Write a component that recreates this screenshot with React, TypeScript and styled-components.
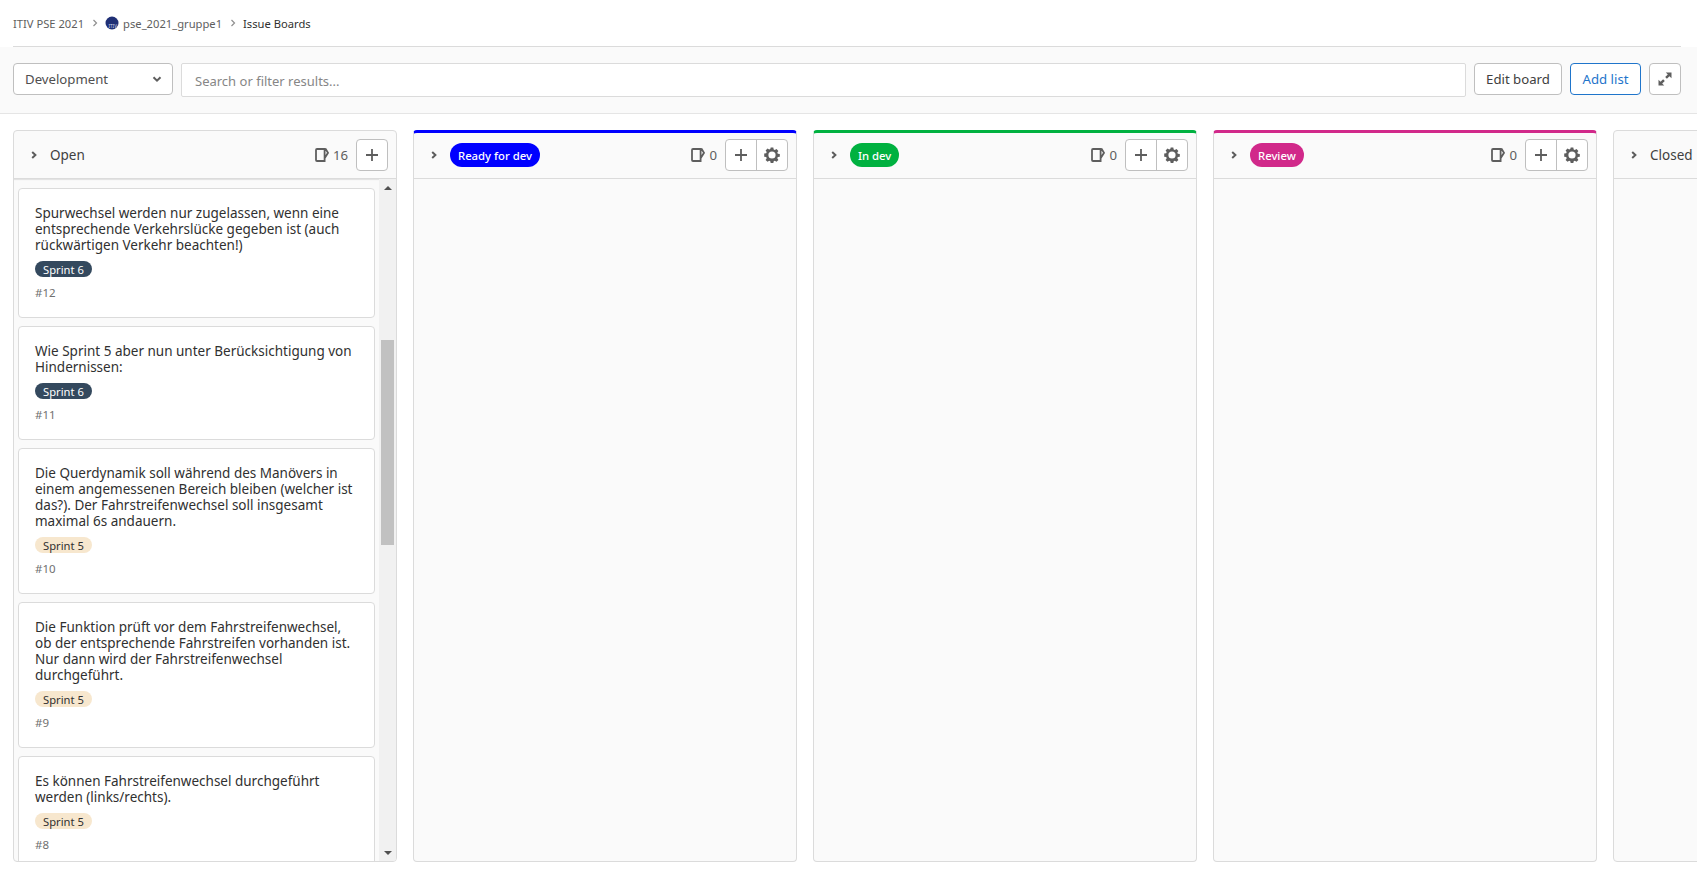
import React from 'react'
import styled, { createGlobalStyle } from 'styled-components'

const GlobalStyle = createGlobalStyle`
  html, body {
    margin: 0;
    padding: 0;
    height: 100%;
    overflow: hidden;
    background: #fff;
  }
  body {
    font-family: "Noto Sans", "Open Sans", sans-serif;
    font-size: 13.2px;
    color: #303030;
  }
`

const Page = styled.div`
  width: 1697px;
  height: 872px;
  overflow: hidden;
  display: flex;
  flex-direction: column;
`
const Breadcrumbs = styled.nav`
  height: 46px;
  margin: 0 16px 0 13px;
  border-bottom: 1px solid #dbdbdb;
  display: flex;
  align-items: center;
  flex-shrink: 0;
  font-size: 11.2px;
  color: #5e5e5e;
`
const Crumb = styled.span<{ current?: boolean }>`
  display: flex;
  align-items: center;
  gap: 4px;
  color: ${({ current }) => (current ? '#303030' : '#5e5e5e')};
`
const CrumbSep = styled.svg`
  width: 8px;
  height: 8px;
  margin: 0 6.5px;
  fill: none;
  stroke: #8f8f8f;
  stroke-width: 1.2;
`
const Avatar = styled.svg`
  width: 14px;
  height: 14px;
`
const FilterBar = styled.div`
  height: 67px;
  box-sizing: border-box;
  background: #fafafa;
  border-bottom: 1px solid #e5e5e5;
  padding: 16px 16px 0 13px;
  display: flex;
  align-items: flex-start;
  flex-shrink: 0;
`
const BoardSelect = styled.div`
  width: 160px;
  height: 32px;
  box-sizing: border-box;
  background: #fff;
  border: 1px solid #bfbfbf;
  border-radius: 4px;
  padding: 0 10px 0 11px;
  display: flex;
  align-items: center;
  justify-content: space-between;
  margin-right: 8px;
  color: #4f4f4f;
`
const SearchBox = styled.div`
  flex: 1;
  height: 34px;
  box-sizing: border-box;
  background: #fff;
  border: 1px solid #dbdbdb;
  border-radius: 2px;
  padding: 1px 13px 0;
  display: flex;
  align-items: center;
  font-size: 13px;
  color: #868686;
  margin-right: 8px;
`
const Button = styled.button<{ primary?: boolean; square?: boolean }>`
  height: 32px;
  box-sizing: border-box;
  margin-right: ${({ square }) => (square ? '0' : '8px')};
  padding: 0;
  width: ${({ square, primary }) => (square ? '32px' : primary ? '71px' : '88px')};
  background: #fff;
  border: 1px solid ${({ primary }) => (primary ? '#1f75cb' : '#bfbfbf')};
  border-radius: 4px;
  font-family: inherit;
  font-size: 13.2px;
  color: ${({ primary }) => (primary ? '#1f75cb' : '#404040')};
  display: flex;
  align-items: center;
  justify-content: center;
  flex-shrink: 0;
`
const Board = styled.div`
  flex: 1;
  min-height: 0;
  padding: 16px 0 10px 13px;
  display: flex;
  gap: 16px;
  overflow: hidden;
`
const Column = styled.section<{ accent?: string }>`
  width: 384px;
  flex-shrink: 0;
  box-sizing: border-box;
  background: #fafafa;
  border: 1px solid #dbdbdb;
  border-top: ${({ accent }) => (accent ? `3px solid ${accent}` : '1px solid #dbdbdb')};
  border-radius: 4px;
  display: flex;
  flex-direction: column;
  overflow: hidden;
`
const ColumnHeader = styled.header<{ accent?: boolean }>`
  height: 32px;
  flex-shrink: 0;
  border-bottom: 1px solid #dbdbdb;
  padding: ${({ accent }) => (accent ? '6px 8px 7px 15px' : '8px 8px 7px 15px')};
  display: flex;
  align-items: center;
`
const HeaderTitle = styled.div`
  flex: 1;
  display: flex;
  align-items: center;
  gap: 11px;
`
const Chevron = styled.svg`
  width: 10px;
  height: 10px;
  fill: none;
  stroke: #5e5e5e;
  stroke-width: 2;
`
const TitleText = styled.span`
  font-size: 13.5px;
  color: #404040;
`
const ColumnLabel = styled.span<{ bg: string }>`
  height: 24px;
  padding: 0 8px;
  border-radius: 12px;
  background: ${({ bg }) => bg};
  color: #fff;
  font-size: 11.3px;
  font-weight: 500;
  display: flex;
  align-items: center;
`
const Count = styled.span`
  display: flex;
  align-items: center;
  gap: 4px;
  color: #5e5e5e;
  margin-right: 8px;
`
const IssueIcon = styled.svg`
  width: 14px;
  height: 14px;
  fill: none;
  stroke: #5e5e5e;
  stroke-width: 1.8;
`
const ButtonGroup = styled.div`
  display: flex;
  height: 32px;
  box-sizing: border-box;
  background: #fff;
  border: 1px solid #bfbfbf;
  border-radius: 4px;
`
const GroupButton = styled.span`
  width: 30px;
  display: flex;
  align-items: center;
  justify-content: center;
  & + & {
    border-left: 1px solid #bfbfbf;
  }
`
const GlyphIcon = styled.svg`
  width: 16px;
  height: 16px;
  fill: #5e5e5e;
`
const ListArea = styled.div`
  flex: 1;
  min-height: 0;
  display: flex;
  overflow: hidden;
`
const CardList = styled.div`
  flex: 1;
  min-width: 0;
  padding: 9px 4px 0 4px;
  display: flex;
  flex-direction: column;
  gap: 8px;
  overflow: hidden;
  box-shadow: inset 0 2px 1px -1px #e0e0e0;
`
const Card = styled.article`
  flex-shrink: 0;
  background: #fff;
  border: 1px solid #dbdbdb;
  border-radius: 4px;
  padding: 16px;
`
const CardTitle = styled.div`
  font-size: 13.5px;
  line-height: 16px;
  color: #303030;
`
const SprintLabel = styled.span<{ dark?: boolean }>`
  display: flex;
  align-items: center;
  width: fit-content;
  height: 16px;
  margin-top: 8px;
  padding: 0 8px;
  border-radius: 8px;
  font-size: 11.2px;
  background: ${({ dark }) => (dark ? '#34495e' : '#f7e7ce')};
  color: ${({ dark }) => (dark ? '#fff' : '#303030')};
`
const CardId = styled.div`
  margin-top: 8px;
  font-size: 11.5px;
  line-height: 16px;
  color: #707070;
`
const Scrollbar = styled.div`
  width: 17px;
  flex-shrink: 0;
  background: #f1f1f1;
  position: relative;
  display: flex;
  flex-direction: column;
  justify-content: space-between;
  align-items: center;
  padding: 7px 0 6px;
  box-sizing: border-box;
`
const ScrollThumb = styled.div`
  position: absolute;
  top: 161px;
  left: 2px;
  right: 2px;
  height: 205px;
  background: #c1c1c1;
`
const ScrollArrow = styled.span<{ down?: boolean }>`
  width: 0;
  height: 0;
  border-left: 4px solid transparent;
  border-right: 4px solid transparent;
  ${({ down }) => (down ? 'border-top: 4px solid #505050;' : 'border-bottom: 4px solid #505050;')}
`

const issues = [
  { id: 12, title: 'Spurwechsel werden nur zugelassen, wenn eine entsprechende Verkehrslücke gegeben ist (auch rückwärtigen Verkehr beachten!)', sprint: 6 },
  { id: 11, title: 'Wie Sprint 5 aber nun unter Berücksichtigung von Hindernissen:', sprint: 6 },
  { id: 10, title: 'Die Querdynamik soll während des Manövers in einem angemessenen Bereich bleiben (welcher ist das?). Der Fahrstreifenwechsel soll insgesamt maximal 6s andauern.', sprint: 5 },
  { id: 9, title: 'Die Funktion prüft vor dem Fahrstreifenwechsel, ob der entsprechende Fahrstreifen vorhanden ist. Nur dann wird der Fahrstreifenwechsel durchgeführt.', sprint: 5 },
  { id: 8, title: 'Es können Fahrstreifenwechsel durchgeführt werden (links/rechts).', sprint: 5 }
]

const labelled = [
  { label: 'Ready for dev', color: '#0000ff' },
  { label: 'In dev', color: '#00b140' },
  { label: 'Review', color: '#d1298a' }
]

function PlusIcon() {
  return (
    <GlyphIcon viewBox="0 0 16 16">
      <path d="M7.1 2h1.8v5.1H14v1.8H8.9V14H7.1V8.9H2V7.1h5.1z" />
    </GlyphIcon>
  )
}

function GearIcon() {
  return (
    <GlyphIcon viewBox="0 0 16 16">
      <path
        fillRule="evenodd"
        d="M6.7 0.6h2.6l.4 2 1.1.5 1.7-1.1 1.9 1.9-1.1 1.7.5 1.1 2 .4v2.6l-2 .4-.5 1.1 1.1 1.7-1.9 1.9-1.7-1.1-1.1.5-.4 2H6.7l-.4-2-1.1-.5-1.7 1.1-1.9-1.9 1.1-1.7-.5-1.1-2-.4V6.6l2-.4.5-1.1L1.6 3.4l1.9-1.9 1.7 1.1 1.1-.5zM8 4.4a3.6 3.6 0 1 0 0 7.2 3.6 3.6 0 0 0 0-7.2z"
      />
    </GlyphIcon>
  )
}

function CountBadge({ value }: { value: number }) {
  return (
    <Count>
      <IssueIcon viewBox="0 0 14 14">
        <path d="M2 1h7.6v12H2a1 1 0 0 1-1-1V2a1 1 0 0 1 1-1zM9.6 1.2h1.2l2.2 3.6-3.4 5.4" />
      </IssueIcon>
      {value}
    </Count>
  )
}

function HeaderChevron() {
  return (
    <Chevron viewBox="0 0 10 10">
      <path d="M3.2 2 6.4 5 3.2 8" />
    </Chevron>
  )
}

function Separator() {
  return (
    <CrumbSep viewBox="0 0 8 8">
      <path d="M2.5 1 5.5 4 2.5 7" />
    </CrumbSep>
  )
}

export default function App() {
  return (
    <Page>
      <GlobalStyle />
      <Breadcrumbs>
        <Crumb>ITIV PSE 2021</Crumb>
        <Separator />
        <Crumb>
          <Avatar viewBox="0 0 14 14">
            <circle cx="7" cy="7" r="6.5" fill="#1f2f75" />
            <text x="3.5" y="11.5" fontSize="4.6" fill="#d6dcf0" fontFamily="Noto Sans, sans-serif">
              ITIV
            </text>
          </Avatar>
          pse_2021_gruppe1
        </Crumb>
        <Separator />
        <Crumb current>Issue Boards</Crumb>
      </Breadcrumbs>
      <FilterBar>
        <BoardSelect>
          Development
          <Chevron viewBox="0 0 10 10">
            <path d="M1.5 3.2 5 6.7 8.5 3.2" />
          </Chevron>
        </BoardSelect>
        <SearchBox>Search or filter results...</SearchBox>
        <Button>Edit board</Button>
        <Button primary>Add list</Button>
        <Button square>
          <GlyphIcon viewBox="0 0 16 16">
            <path d="M8.8 1.5h5.7v5.7l-2-2-2.6 2.6-1.7-1.7 2.6-2.6zM7.2 14.5H1.5V8.8l2 2 2.6-2.6 1.7 1.7-2.6 2.6z" />
          </GlyphIcon>
        </Button>
      </FilterBar>
      <Board>
        <Column>
          <ColumnHeader>
            <HeaderTitle>
              <HeaderChevron />
              <TitleText>Open</TitleText>
            </HeaderTitle>
            <CountBadge value={16} />
            <ButtonGroup>
              <GroupButton>
                <PlusIcon />
              </GroupButton>
            </ButtonGroup>
          </ColumnHeader>
          <ListArea>
            <CardList>
              {issues.map(issue => (
                <Card key={issue.id}>
                  <CardTitle>{issue.title}</CardTitle>
                  <SprintLabel dark={issue.sprint === 6}>Sprint {issue.sprint}</SprintLabel>
                  <CardId>#{issue.id}</CardId>
                </Card>
              ))}
            </CardList>
            <Scrollbar>
              <ScrollArrow />
              <ScrollThumb />
              <ScrollArrow down />
            </Scrollbar>
          </ListArea>
        </Column>
        {labelled.map(list => (
          <Column key={list.label} accent={list.color}>
            <ColumnHeader accent>
              <HeaderTitle>
                <HeaderChevron />
                <ColumnLabel bg={list.color}>{list.label}</ColumnLabel>
              </HeaderTitle>
              <CountBadge value={0} />
              <ButtonGroup>
                <GroupButton>
                  <PlusIcon />
                </GroupButton>
                <GroupButton>
                  <GearIcon />
                </GroupButton>
              </ButtonGroup>
            </ColumnHeader>
          </Column>
        ))}
        <Column>
          <ColumnHeader>
            <HeaderTitle>
              <HeaderChevron />
              <TitleText>Closed</TitleText>
            </HeaderTitle>
          </ColumnHeader>
        </Column>
      </Board>
    </Page>
  )
}
